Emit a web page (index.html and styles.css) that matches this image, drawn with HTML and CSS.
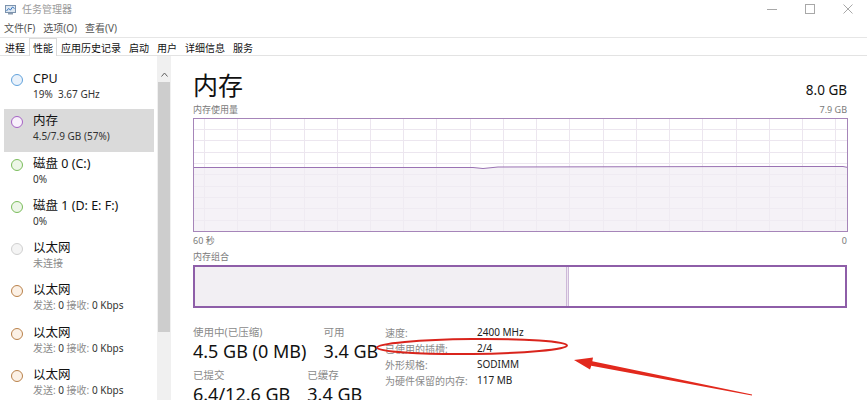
FILE: index.html
```html
<!DOCTYPE html>
<html lang="zh-CN">
<head>
<meta charset="utf-8">
<title>任务管理器</title>
<link rel="stylesheet" href="styles.css">
</head>
<body>
<div class="window">
  <div class="titlebar">
    <svg class="app-icon" width="11" height="11" viewBox="0 0 11 11">
      <rect x="0.5" y="1.5" width="10" height="7" fill="#dfe8f1" stroke="#7c93ad"/>
      <polyline points="1.5,7 3.5,4.5 5.5,6 7.5,3 9.5,4.5" fill="none" stroke="#3a78c2" stroke-width="1"/>
      <rect x="3" y="9" width="5" height="1.5" fill="#8a9bb0"/>
    </svg>
    <span class="title-text">任务管理器</span>
    <div class="win-controls">
      <div class="win-btn"><svg width="10" height="10" viewBox="0 0 10 10"><line x1="0" y1="5.5" x2="10" y2="5.5" stroke="#a8a8a8" stroke-width="1"/></svg></div>
      <div class="win-btn"><svg width="10" height="10" viewBox="0 0 10 10"><rect x="0.5" y="0.5" width="9" height="9" fill="none" stroke="#a8a8a8" stroke-width="1"/></svg></div>
      <div class="win-btn"><svg width="10" height="10" viewBox="0 0 10 10"><path d="M0.5 0.5 L9.5 9.5 M9.5 0.5 L0.5 9.5" stroke="#a8a8a8" stroke-width="1"/></svg></div>
    </div>
  </div>
  <div class="menubar">
    <span>文件(F)</span><span>选项(O)</span><span>查看(V)</span>
  </div>
  <div class="tabs">
    <span class="tab">进程</span>
    <span class="tab active">性能</span>
    <span class="tab">应用历史记录</span>
    <span class="tab">启动</span>
    <span class="tab">用户</span>
    <span class="tab">详细信息</span>
    <span class="tab">服务</span>
  </div>
  <div class="main">
    <div class="sidebar">
      <div class="list">
        <div class="item">
          <span class="dot dot-cpu"></span>
          <div class="item-text"><div class="item-title">CPU</div><div class="item-sub">19%&nbsp; 3.67 GHz</div></div>
        </div>
        <div class="item selected">
          <span class="dot dot-mem"></span>
          <div class="item-text"><div class="item-title">内存</div><div class="item-sub">4.5/7.9 GB (57%)</div></div>
        </div>
        <div class="item">
          <span class="dot dot-disk"></span>
          <div class="item-text"><div class="item-title">磁盘 0 (C:)</div><div class="item-sub">0%</div></div>
        </div>
        <div class="item">
          <span class="dot dot-disk"></span>
          <div class="item-text"><div class="item-title">磁盘 1 (D: E: F:)</div><div class="item-sub">0%</div></div>
        </div>
        <div class="item">
          <span class="dot dot-off"></span>
          <div class="item-text"><div class="item-title">以太网</div><div class="item-sub muted">未连接</div></div>
        </div>
        <div class="item">
          <span class="dot dot-eth"></span>
          <div class="item-text"><div class="item-title">以太网</div><div class="item-sub"><span class="muted">发送:</span> 0 <span class="muted">接收:</span> 0 Kbps</div></div>
        </div>
        <div class="item">
          <span class="dot dot-eth"></span>
          <div class="item-text"><div class="item-title">以太网</div><div class="item-sub"><span class="muted">发送:</span> 0 <span class="muted">接收:</span> 0 Kbps</div></div>
        </div>
        <div class="item">
          <span class="dot dot-eth"></span>
          <div class="item-text"><div class="item-title">以太网</div><div class="item-sub"><span class="muted">发送:</span> 0 <span class="muted">接收:</span> 0 Kbps</div></div>
        </div>
      </div>
      <div class="scrollbar">
        <div class="scroll-arrow"><svg width="7" height="5" viewBox="0 0 7 5"><polyline points="0.5,4.5 3.5,1 6.5,4.5" fill="none" stroke="#606060" stroke-width="1"/></svg></div>
        <div class="scroll-thumb"></div>
      </div>
    </div>
    <div class="content">
      <div class="header">
        <span class="heading">内存</span>
        <span class="capacity">8.0 GB</span>
      </div>
      <div class="caption-row">
        <span>内存使用量</span>
        <span>7.9 GB</span>
      </div>
      <svg class="graph" width="655" height="114" viewBox="0 0 655 114">
        <g stroke="#ece6ef" stroke-width="1">
          <line x1="0" y1="11.5" x2="655" y2="11.5"/>
          <line x1="0" y1="22.5" x2="655" y2="22.5"/>
          <line x1="0" y1="34.5" x2="655" y2="34.5"/>
          <line x1="0" y1="45.5" x2="655" y2="45.5"/>
          <line x1="0" y1="56.5" x2="655" y2="56.5"/>
          <line x1="0" y1="68.5" x2="655" y2="68.5"/>
          <line x1="0" y1="79.5" x2="655" y2="79.5"/>
          <line x1="0" y1="90.5" x2="655" y2="90.5"/>
          <line x1="0" y1="102.5" x2="655" y2="102.5"/>
          <line x1="11.5" y1="0" x2="11.5" y2="114"/>
          <line x1="44.5" y1="0" x2="44.5" y2="114"/>
          <line x1="77.5" y1="0" x2="77.5" y2="114"/>
          <line x1="111.5" y1="0" x2="111.5" y2="114"/>
          <line x1="144.5" y1="0" x2="144.5" y2="114"/>
          <line x1="177.5" y1="0" x2="177.5" y2="114"/>
          <line x1="210.5" y1="0" x2="210.5" y2="114"/>
          <line x1="243.5" y1="0" x2="243.5" y2="114"/>
          <line x1="277.5" y1="0" x2="277.5" y2="114"/>
          <line x1="310.5" y1="0" x2="310.5" y2="114"/>
          <line x1="343.5" y1="0" x2="343.5" y2="114"/>
          <line x1="376.5" y1="0" x2="376.5" y2="114"/>
          <line x1="410.5" y1="0" x2="410.5" y2="114"/>
          <line x1="443.5" y1="0" x2="443.5" y2="114"/>
          <line x1="476.5" y1="0" x2="476.5" y2="114"/>
          <line x1="509.5" y1="0" x2="509.5" y2="114"/>
          <line x1="543.5" y1="0" x2="543.5" y2="114"/>
          <line x1="576.5" y1="0" x2="576.5" y2="114"/>
          <line x1="609.5" y1="0" x2="609.5" y2="114"/>
          <line x1="642.5" y1="0" x2="642.5" y2="114"/>
        </g>
        <polygon points="0,49.5 280,49.5 290,50.5 305,49 560,48.5 650,48.5 655,49.5 655,114 0,114" fill="#f1ecf4" fill-opacity="0.7"/>
        <polyline points="0,49.5 280,49.5 290,50.5 305,49 560,48.5 650,48.5 655,49.5" fill="none" stroke="#9a72b3" stroke-width="1"/>
        <rect x="0.5" y="0.5" width="654" height="113" fill="none" stroke="#a685b9" stroke-width="1"/>
      </svg>
      <div class="axis-row">
        <span>60 秒</span>
        <span>0</span>
      </div>
      <div class="caption-row small">
        <span>内存组合</span>
      </div>
      <div class="composition">
        <div class="comp-used"></div>
        <div class="comp-modified"></div>
        <div class="comp-free"></div>
      </div>
      <div class="stats">
        <div class="stats-left">
          <div class="stat-row">
            <div class="stat"><div class="stat-label">使用中(已压缩)</div><div class="stat-value">4.5 GB (0 MB)</div></div>
            <div class="stat"><div class="stat-label">可用</div><div class="stat-value">3.4 GB</div></div>
          </div>
          <div class="stat-row second">
            <div class="stat"><div class="stat-label">已提交</div><div class="stat-value">6.4/12.6 GB</div></div>
            <div class="stat"><div class="stat-label">已缓存</div><div class="stat-value">3.4 GB</div></div>
          </div>
        </div>
        <div class="stats-right">
          <div class="kv"><span class="k">速度:</span><span class="v">2400 MHz</span></div>
          <div class="kv"><span class="k">已使用的插槽:</span><span class="v">2/4</span></div>
          <div class="kv"><span class="k">外形规格:</span><span class="v">SODIMM</span></div>
          <div class="kv"><span class="k">为硬件保留的内存:</span><span class="v">117 MB</span></div>
        </div>
      </div>
    </div>
  </div>
  <svg class="annotation" width="867" height="400" viewBox="0 0 867 400">
    <ellipse cx="472" cy="346.5" rx="95" ry="7.5" fill="none" stroke="#d9241c" stroke-width="2" transform="rotate(-0.6 472 346.5)"/>
    <polygon points="574,360 593,357.6 592.3,361.3 752.1,394.6 751.9,395.4 591.3,365.7 590,369.5" fill="#e2291d"/>
  </svg>
</div>
</body>
</html>
```

FILE: styles.css
```css
* {
  box-sizing: border-box;
}

html, body {
  margin: 0;
  padding: 0;
  background: #ffffff;
}

body {
  font-family: "Noto Sans", "Noto Sans CJK SC", sans-serif;
  color: #1a1a1a;
  width: 867px;
  height: 400px;
  overflow: hidden;
}

.window {
  position: relative;
  width: 867px;
  height: 400px;
  overflow: hidden;
  display: flex;
  flex-direction: column;
}

.titlebar {
  height: 18px;
  display: flex;
  align-items: center;
  padding-left: 5px;
  flex: none;
}

.app-icon {
  flex: none;
  margin-top: 1px;
}

.title-text {
  margin-left: 6px;
  font-size: 10px;
  color: #9a9a9a;
  line-height: 18px;
}

.win-controls {
  margin-left: auto;
  display: flex;
  height: 18px;
}

.win-btn {
  width: 38px;
  height: 18px;
  display: flex;
  align-items: center;
  justify-content: center;
}

.menubar {
  height: 19px;
  display: flex;
  align-items: center;
  gap: 8px;
  padding-left: 4px;
  font-size: 10px;
  color: #555;
  flex: none;
}

.tabs {
  height: 19px;
  display: flex;
  align-items: stretch;
  padding-left: 1px;
  border-top: 1px solid #e6e6e6;
  border-bottom: 1px solid #e3e3e3;
  font-size: 10px;
  color: #111;
  flex: none;
}

.tab {
  padding: 0 3px;
  display: flex;
  align-items: center;
  border: 1px solid transparent;
  border-bottom: none;
}

.tab.active {
  background: #fff;
  border-color: #dadada;
  margin-bottom: -1px;
}

.main {
  flex: 1;
  display: flex;
  min-height: 0;
}

.sidebar {
  width: 172px;
  flex: none;
  display: flex;
}

.list {
  width: 157px;
  padding: 11px 3px 0 4px;
}

.item {
  height: 42.3px;
  display: flex;
  align-items: flex-start;
  padding: 4px 0 0 7px;
}

.item.selected {
  background: #dadada;
}

.dot {
  width: 12px;
  height: 12px;
  border-radius: 50%;
  border: 1.5px solid #888;
  margin-top: 3px;
  flex: none;
}

.dot-cpu { border-color: #62a3dc; background: #eaf2fb; }
.dot-mem { border-color: #a562c4; background: #f8f0fb; }
.dot-disk { border-color: #7bbd5c; background: #edf6e8; }
.dot-off { border-color: #d0d0d0; background: #f4f4f4; }
.dot-eth { border-color: #b9814a; background: #fcf1e6; }

.item-text {
  margin-left: 10px;
}

.item-title {
  font-size: 12.5px;
  line-height: 16px;
  color: #111;
}

.item-sub {
  font-size: 10px;
  line-height: 14px;
  color: #333;
  white-space: nowrap;
}

.muted {
  color: #8c8c8c;
}

.scrollbar {
  width: 14px;
  background: #f0f0f0;
  display: flex;
  flex-direction: column;
  align-items: center;
  padding-top: 10px;
}

.scroll-arrow {
  height: 16px;
  display: flex;
  align-items: center;
  justify-content: center;
  flex: none;
}

.scroll-thumb {
  width: 12px;
  height: 250px;
  background: #cdcdcd;
  flex: none;
}

.content {
  flex: 1;
  padding: 14px 20px 0 21px;
  display: flex;
  flex-direction: column;
  min-width: 0;
}

.content > * {
  flex: none;
}

.header {
  height: 30px;
  display: flex;
  justify-content: space-between;
  align-items: flex-end;
}

.heading {
  font-size: 25px;
  line-height: 30px;
  color: #111;
}

.capacity {
  font-size: 13.5px;
  line-height: 20px;
  color: #111;
}

.caption-row {
  height: 18px;
  display: flex;
  justify-content: space-between;
  align-items: center;
  font-size: 9px;
  color: #7a7a7a;
}

.caption-row.small {
  height: 16px;
}

.graph {
  display: block;
}

.axis-row {
  height: 16px;
  display: flex;
  justify-content: space-between;
  align-items: center;
  font-size: 9px;
  color: #7a7a7a;
}

.composition {
  margin-top: 1px;
  height: 43px;
  border: 2px solid #8e5ea8;
  display: flex;
}

.comp-used {
  width: 372px;
  background: #f2eff3;
  border-right: 1px solid #cdb8d8;
}

.comp-modified {
  width: 2px;
  background: #ede6f0;
  border-right: 1px solid #cdb8d8;
}

.comp-free {
  flex: 1;
  background: #fff;
}

.stats {
  margin-top: 16px;
  display: flex;
}

.stats-left {
  width: 192px;
  flex: none;
}

.stat-row {
  display: flex;
  gap: 17px;
}

.stat-row.second {
  margin-top: 5px;
}

.stat-label {
  font-size: 10.5px;
  line-height: 16px;
  color: #8a8a8a;
  white-space: nowrap;
}

.stat-value {
  font-size: 18px;
  line-height: 22px;
  color: #111;
  white-space: nowrap;
}

.stats-right {
  display: flex;
  flex-direction: column;
}

.kv {
  height: 16px;
  display: flex;
  align-items: center;
  font-size: 10px;
}

.k {
  width: 92px;
  color: #8a8a8a;
  white-space: nowrap;
}

.v {
  color: #222;
}

.annotation {
  position: absolute;
  left: 0;
  top: 0;
  pointer-events: none;
}
```
